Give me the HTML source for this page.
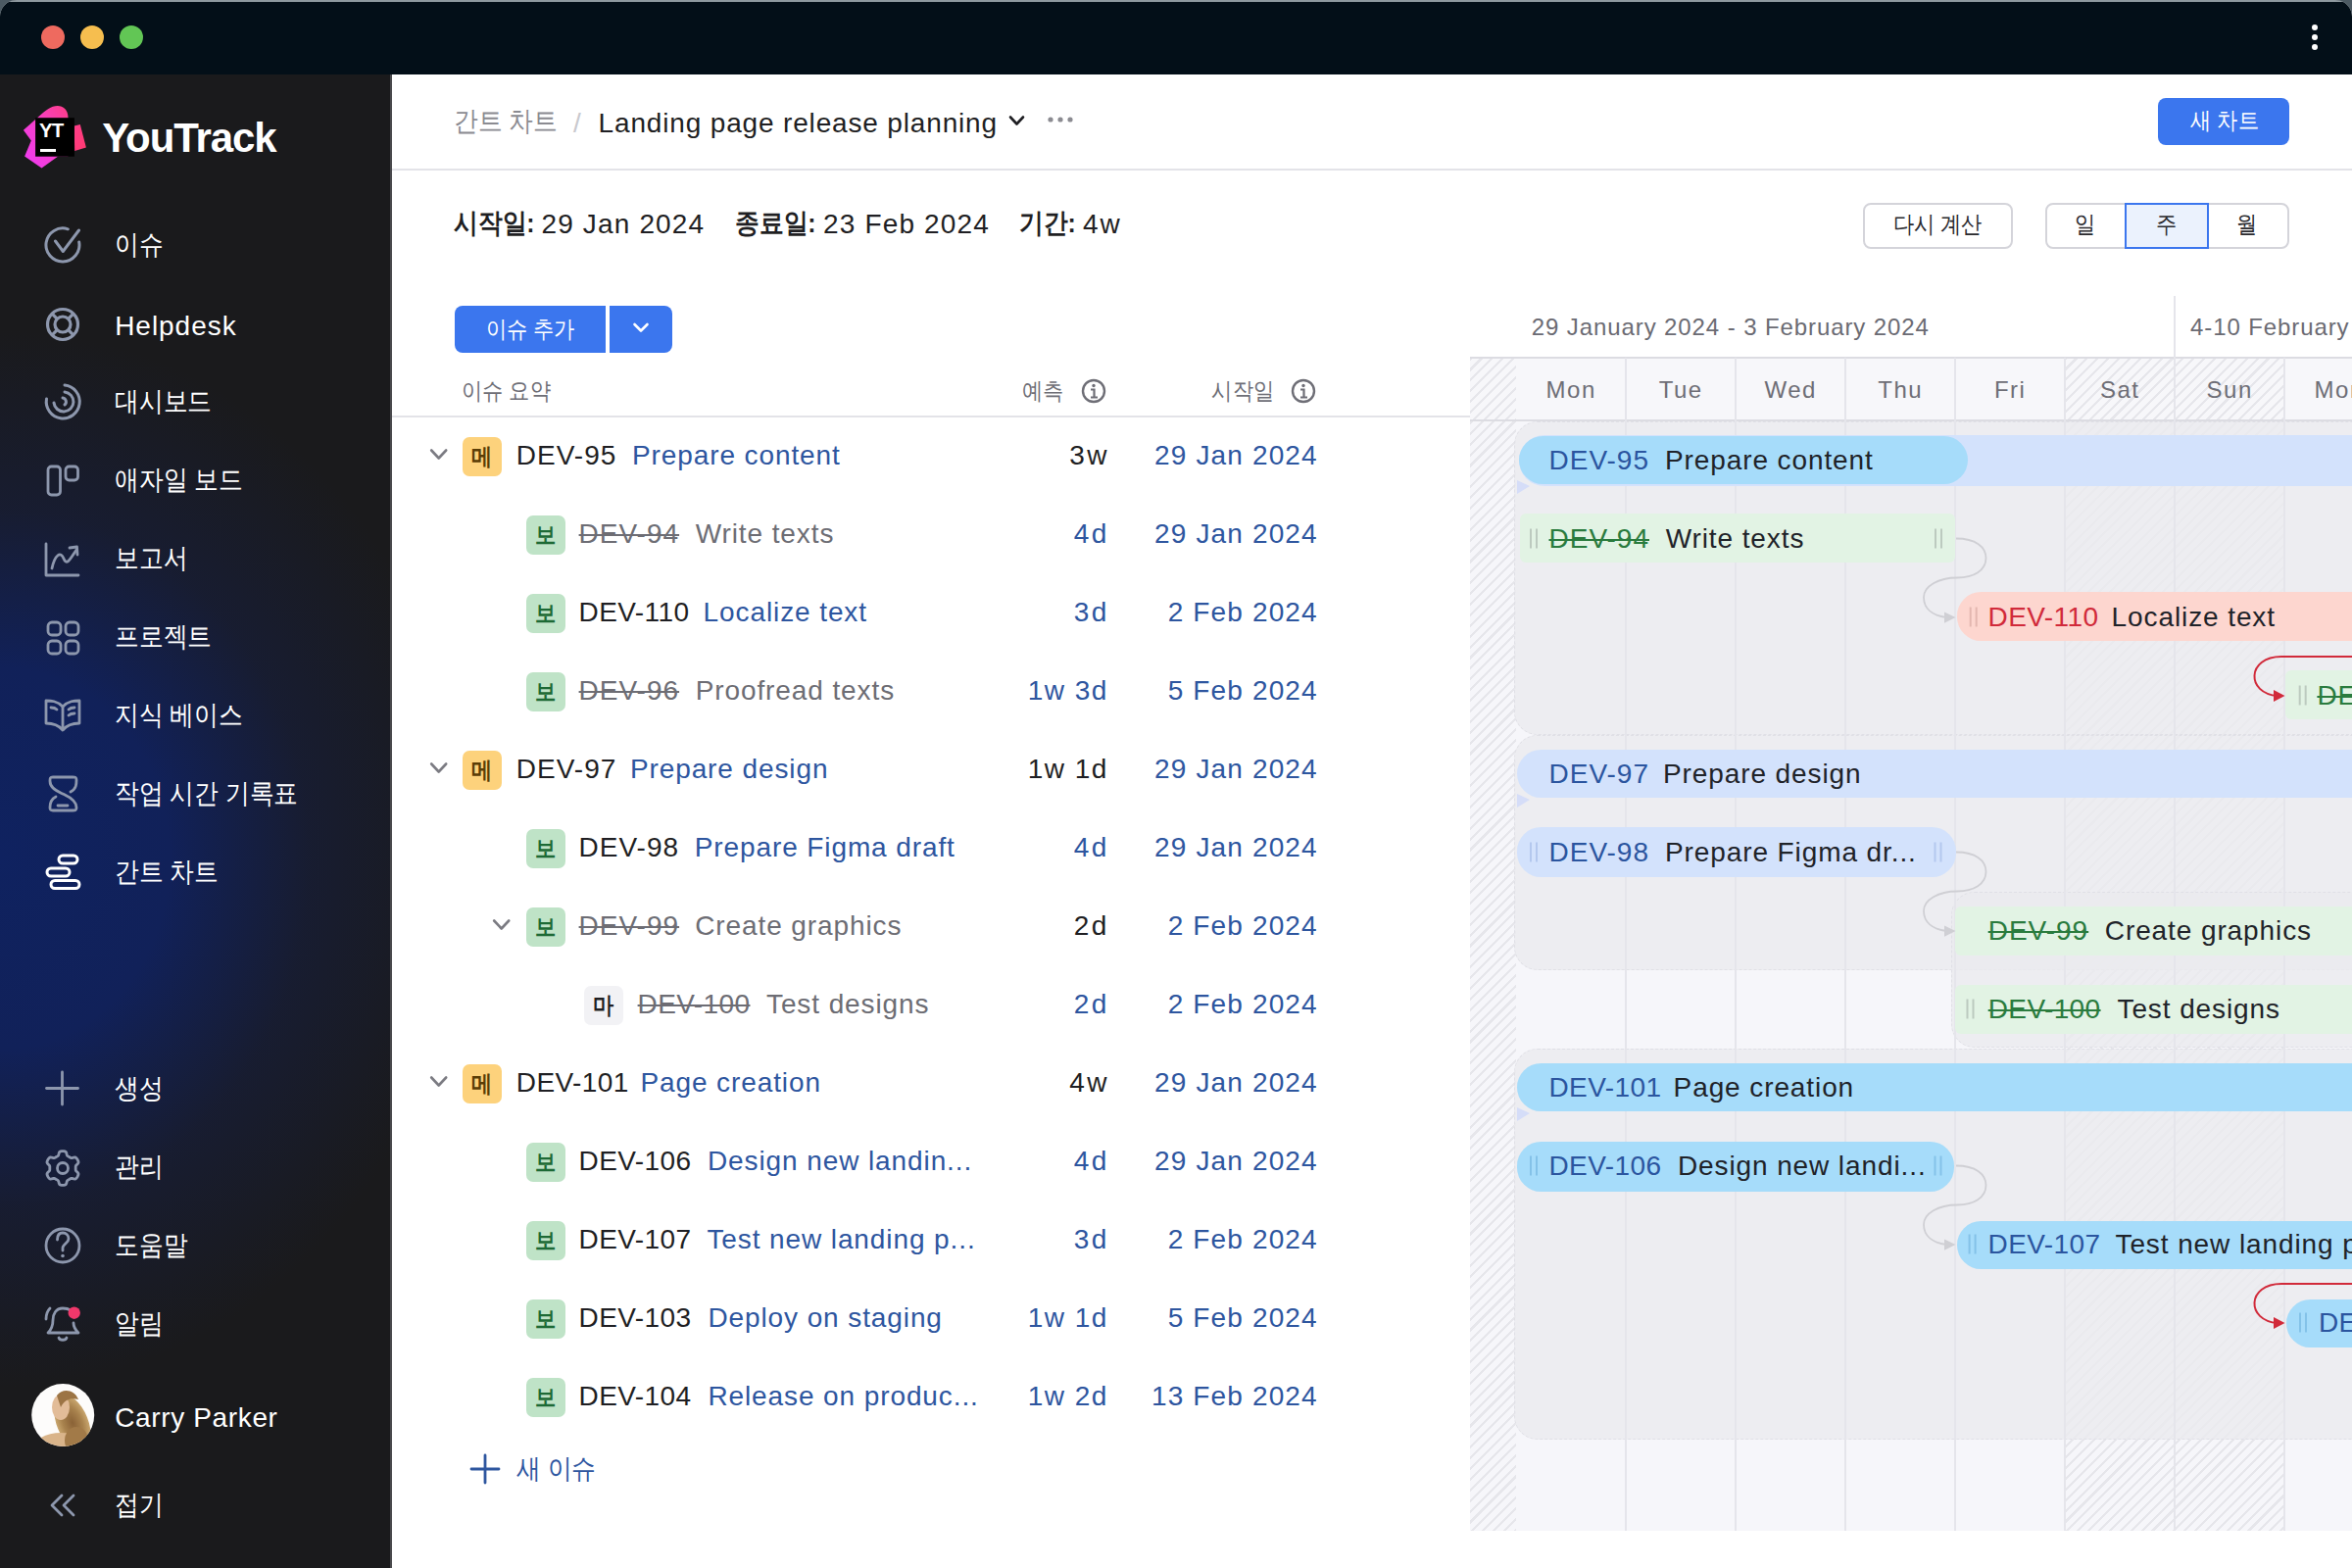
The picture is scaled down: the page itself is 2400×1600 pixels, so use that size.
<!DOCTYPE html>
<html><head><meta charset="utf-8"><style>
html,body{margin:0;padding:0;width:2400px;height:1600px;overflow:hidden;background:#4c5a63;}
#win{position:absolute;left:0;top:0;width:2400px;height:1600px;overflow:hidden;border-radius:17px 17px 0 0;background:#fff;}
.t{position:absolute;white-space:nowrap;font-family:'Liberation Sans', sans-serif;}
.r{position:absolute;}
svg{position:absolute;left:0;top:0;overflow:visible;}
</style></head><body><div id="win">

<div class="r" style="left:0px;top:0px;width:2400px;height:76px;background:#030f18;"></div>
<div class="r" style="left:0px;top:0px;width:2400px;height:1.5px;background:#8e999f;"></div>
<svg width="2400" height="80"><circle cx="54" cy="38" r="12" fill="#ee6a5f"/><circle cx="94" cy="38" r="12" fill="#f6be4f"/><circle cx="134" cy="38" r="12" fill="#62c655"/><circle cx="2362" cy="28" r="3" fill="#fff"/><circle cx="2362" cy="38" r="3" fill="#fff"/><circle cx="2362" cy="48" r="3" fill="#fff"/></svg>
<div class="r" style="left:0px;top:76px;width:400px;height:1524px;background:#1b1b1f;background:radial-gradient(ellipse 480px 540px at 0px 800px, #0f2260 0%, #112159 36%, rgba(22,30,62,0.6) 66%, rgba(26,26,28,0) 100%), #1a1a1c;"></div>
<div class="r" style="left:398px;top:76px;width:2px;height:1524px;background:#4a4a4d;"></div>
<svg width="400" height="200"><defs><linearGradient id="lg" x1="0" y1="1" x2="1" y2="0"><stop offset="0" stop-color="#ee3af5"/><stop offset="0.55" stop-color="#f640c8"/><stop offset="1" stop-color="#ff3d86"/></linearGradient><linearGradient id="lg2" x1="0" y1="0" x2="1" y2="1"><stop offset="0" stop-color="#ff3d8a"/><stop offset="1" stop-color="#ff3a70"/></linearGradient></defs><path d="M23.9 132.7 L40 118.4 C47 112.5 52 108 58.8 108 C64.5 108 69.5 112 69.5 120 L69.5 159.5 L59.3 159.5 L42.5 171.4 L25.1 159.4 L31.8 143.4 Z" fill="url(#lg)"/><path d="M75.7 128.6 L81.8 127 L87.9 150.5 L76.2 154 Z" fill="url(#lg2)"/><rect x="36.1" y="120.2" width="39.8" height="39.5" fill="#000"/><text x="40" y="140.3" font-family="Liberation Sans" font-weight="700" font-size="20.5" fill="#fff" letter-spacing="-0.8">YT</text><rect x="41" y="152" width="16" height="3" fill="#fff"/></svg>
<div class="t " style="top:119.8px;font-size:42px;line-height:42px;color:#ffffff;font-weight:700;letter-spacing:-1.1px;word-spacing:0px;left:104.3px;transform-origin:0 0;">YouTrack</div>
<svg width="400" height="1600"><path d="M80.7 247 A17 17 0 1 1 69.3 233.8" fill="none" stroke="#8d97ad" stroke-width="3" stroke-linecap="round"/><path d="M56.5 246 L64.3 256.5 L80.5 235" fill="none" stroke="#8d97ad" stroke-width="3" stroke-linecap="round" stroke-linejoin="round"/><g fill="none" stroke="#8d97ad" stroke-width="3.2"><circle cx="64" cy="331" r="15.5"/><circle cx="64" cy="331" r="8"/><line x1="69.7" y1="336.7" x2="75.3" y2="342.3"/><line x1="58.3" y1="336.7" x2="52.7" y2="342.3"/><line x1="58.3" y1="325.3" x2="52.7" y2="319.7"/><line x1="69.7" y1="325.3" x2="75.3" y2="319.7"/></g><g fill="none" stroke="#8d97ad" stroke-width="3" stroke-linecap="round"><path d="M66 393 A17 17 0 1 1 47.5 407"/><path d="M66 400 A10 10 0 1 1 55 411"/><path d="M64 406 A4 4 0 0 1 66 413"/></g><g fill="none" stroke="#8d97ad" stroke-width="2.8"><rect x="49" y="476" width="12.5" height="29" rx="3.5"/><rect x="67" y="476" width="12.5" height="14" rx="3.5"/></g><g fill="none" stroke="#8d97ad" stroke-width="2.8" stroke-linecap="round" stroke-linejoin="round"><path d="M47 555 L47 587 L80 587"/><path d="M53 580 C56 566 62 562 65 570 C68 578 72 570 78 561"/><path d="M71 559 L78.5 558 L79 566"/></g><g fill="none" stroke="#8d97ad" stroke-width="2.8"><rect x="49" y="635" width="13" height="13" rx="4"/><rect x="49" y="654" width="13" height="13" rx="4"/><rect x="67" y="635" width="13" height="13" rx="4"/><rect x="67" y="654" width="13" height="13" rx="4"/></g><g fill="none" stroke="#8d97ad" stroke-width="2.8" stroke-linejoin="round" stroke-linecap="round"><path d="M64 721 C58 715 52 715 47 715 L47 738 C53 738 59 739 64 745 C69 739 75 738 81 738 L81 715 C76 715 70 715 64 721 Z"/><path d="M64 721 L64 744"/><path d="M52 722 C54 722 56 722 58 724"/><path d="M70 724 C72 722 74 722 76 722"/><path d="M70 730 C72 728 74 728 76 728"/></g><g fill="none" stroke="#8d97ad" stroke-width="2.8" stroke-linecap="round" stroke-linejoin="round"><path d="M72 808 C78 805 78 800 78 796 C78 793 77 793 74 793 L54 793 C51 793 51 794 51 797 C51 805 60 808 64 810 C68 812 78 816 78 824 C78 827 77 827 74 827 L54 827 C51 827 51 826 51 824 C51 818 53 815 57 813"/><path d="M59 822 L69 822"/></g><g fill="none" stroke="#fff" stroke-width="3"><rect x="60" y="873" width="19" height="8" rx="4"/><rect x="48" y="886" width="23" height="8" rx="4"/><rect x="52" y="898.5" width="29" height="8" rx="4"/></g><g stroke="#8d97ad" stroke-width="2.8" stroke-linecap="round"><path d="M63.5 1094 L63.5 1127"/><path d="M47.5 1110.5 L79.5 1110.5"/></g><g fill="none" stroke="#8d97ad" stroke-width="2.8" stroke-linejoin="round"><path d="M77.20 1192.00 L77.20 1192.46 L77.19 1192.92 L77.19 1193.39 L77.23 1193.86 L77.37 1194.36 L77.72 1194.92 L78.37 1195.58 L79.17 1196.35 L79.76 1197.12 L80.00 1197.82 L79.98 1198.46 L79.83 1199.05 L79.62 1199.62 L79.36 1200.17 L79.07 1200.70 L78.75 1201.22 L78.41 1201.72 L78.02 1202.19 L77.58 1202.61 L77.04 1202.94 L76.32 1203.09 L75.36 1202.97 L74.29 1202.66 L73.39 1202.42 L72.73 1202.40 L72.23 1202.53 L71.80 1202.73 L71.39 1202.96 L71.00 1203.20 L70.60 1203.43 L70.20 1203.66 L69.80 1203.89 L69.40 1204.12 L69.01 1204.39 L68.64 1204.76 L68.33 1205.34 L68.08 1206.24 L67.82 1207.32 L67.45 1208.21 L66.96 1208.76 L66.40 1209.07 L65.81 1209.24 L65.21 1209.33 L64.61 1209.38 L64.00 1209.40 L63.39 1209.38 L62.79 1209.33 L62.19 1209.24 L61.60 1209.07 L61.04 1208.76 L60.55 1208.21 L60.18 1207.32 L59.92 1206.24 L59.67 1205.34 L59.36 1204.76 L58.99 1204.39 L58.60 1204.12 L58.20 1203.89 L57.80 1203.66 L57.40 1203.43 L57.00 1203.20 L56.61 1202.96 L56.20 1202.73 L55.77 1202.53 L55.27 1202.40 L54.61 1202.42 L53.71 1202.66 L52.64 1202.97 L51.68 1203.09 L50.96 1202.94 L50.42 1202.61 L49.98 1202.19 L49.59 1201.72 L49.25 1201.22 L48.93 1200.70 L48.64 1200.17 L48.38 1199.62 L48.17 1199.05 L48.02 1198.46 L48.00 1197.82 L48.24 1197.12 L48.83 1196.35 L49.63 1195.58 L50.28 1194.92 L50.63 1194.36 L50.77 1193.86 L50.81 1193.39 L50.81 1192.92 L50.80 1192.46 L50.80 1192.00 L50.80 1191.54 L50.81 1191.08 L50.81 1190.61 L50.77 1190.14 L50.63 1189.64 L50.28 1189.08 L49.63 1188.42 L48.83 1187.65 L48.24 1186.88 L48.00 1186.18 L48.02 1185.54 L48.17 1184.95 L48.38 1184.38 L48.64 1183.83 L48.93 1183.30 L49.25 1182.78 L49.59 1182.28 L49.98 1181.81 L50.42 1181.39 L50.96 1181.06 L51.68 1180.91 L52.64 1181.03 L53.71 1181.34 L54.61 1181.58 L55.27 1181.60 L55.77 1181.47 L56.20 1181.27 L56.61 1181.04 L57.00 1180.80 L57.40 1180.57 L57.80 1180.34 L58.20 1180.11 L58.60 1179.88 L58.99 1179.61 L59.36 1179.24 L59.67 1178.66 L59.92 1177.76 L60.18 1176.68 L60.55 1175.79 L61.04 1175.24 L61.60 1174.93 L62.19 1174.76 L62.79 1174.67 L63.39 1174.62 L64.00 1174.60 L64.61 1174.62 L65.21 1174.67 L65.81 1174.76 L66.40 1174.93 L66.96 1175.24 L67.45 1175.79 L67.82 1176.68 L68.08 1177.76 L68.33 1178.66 L68.64 1179.24 L69.01 1179.61 L69.40 1179.88 L69.80 1180.11 L70.20 1180.34 L70.60 1180.57 L71.00 1180.80 L71.39 1181.04 L71.80 1181.27 L72.23 1181.47 L72.73 1181.60 L73.39 1181.58 L74.29 1181.34 L75.36 1181.03 L76.32 1180.91 L77.04 1181.06 L77.58 1181.39 L78.02 1181.81 L78.41 1182.28 L78.75 1182.78 L79.07 1183.30 L79.36 1183.83 L79.62 1184.38 L79.83 1184.95 L79.98 1185.54 L80.00 1186.18 L79.76 1186.88 L79.17 1187.65 L78.37 1188.42 L77.72 1189.08 L77.37 1189.64 L77.23 1190.14 L77.19 1190.61 L77.19 1191.08 L77.20 1191.54 L77.20 1192.00Z"/><circle cx="64" cy="1192" r="5.5"/></g><g fill="none" stroke="#8d97ad" stroke-width="2.8" stroke-linecap="round"><circle cx="64" cy="1271" r="17"/><path d="M58.5 1265 C58.5 1260 61 1258 64 1258 C67.5 1258 70 1260.5 70 1264 C70 1268 65 1269 64 1273 L64 1276"/></g><circle cx="64" cy="1281.5" r="1.8" fill="#8d97ad"/><g fill="none" stroke="#8d97ad" stroke-width="2.8" stroke-linecap="round" stroke-linejoin="round"><path d="M72 1337 C69 1335 67 1335 64 1335 C57 1335 54 1341 54 1347 C54 1354 52 1357 49 1360 L80 1360 C77 1357 75 1354 75 1350"/><path d="M60 1365 C61 1368 67 1368 68 1365"/><path d="M47 1346 C47 1342 49 1337 51 1335"/></g><circle cx="75.7" cy="1339.7" r="6.2" fill="#f0386b"/><g fill="none" stroke="#8d97ad" stroke-width="2.8" stroke-linecap="round" stroke-linejoin="round"><path d="M63 1526 L53 1536 L63 1546"/><path d="M75 1526 L65 1536 L75 1546"/></g></svg>
<svg width="400" height="1600"><defs><clipPath id="av"><circle cx="64.2" cy="1444" r="32"/></clipPath><radialGradient id="hair" cx="0.5" cy="0.5" r="0.5"><stop offset="0" stop-color="#8a6236"/><stop offset="0.6" stop-color="#a9834e"/><stop offset="1" stop-color="#c9a66e"/></radialGradient></defs><g clip-path="url(#av)"><rect x="30" y="1410" width="70" height="70" fill="#fdfcfb"/><ellipse cx="74" cy="1452" rx="16" ry="30" fill="url(#hair)" transform="rotate(-22 74 1452)"/><ellipse cx="62" cy="1436" rx="9" ry="13" fill="#e2bc98"/><path d="M58 1424 C64 1416 76 1418 80 1428 C72 1426 66 1428 62 1436 Z" fill="#9c7444"/><ellipse cx="62" cy="1478" rx="28" ry="16" fill="#d9b48a"/><ellipse cx="78" cy="1470" rx="12" ry="14" fill="#a27a48"/></g></svg>
<div class="t " style="top:236.0px;font-size:28px;line-height:28px;color:#ffffff;font-weight:400;letter-spacing:0px;word-spacing:0px;left:117.4px;transform-origin:0 0;transform:scaleX(0.885);">이슈</div>
<div class="t " style="top:318.6px;font-size:28px;line-height:28px;color:#ffffff;font-weight:400;letter-spacing:0.96px;word-spacing:0px;left:117.2px;transform-origin:0 0;">Helpdesk</div>
<div class="t " style="top:396.0px;font-size:28px;line-height:28px;color:#ffffff;font-weight:400;letter-spacing:0px;word-spacing:0px;left:117.4px;transform-origin:0 0;transform:scaleX(0.885);">대시보드</div>
<div class="t " style="top:475.5px;font-size:28px;line-height:28px;color:#ffffff;font-weight:400;letter-spacing:0px;word-spacing:0px;left:117.4px;transform-origin:0 0;transform:scaleX(0.885);">애자일 보드</div>
<div class="t " style="top:555.5px;font-size:28px;line-height:28px;color:#ffffff;font-weight:400;letter-spacing:0px;word-spacing:0px;left:117.4px;transform-origin:0 0;transform:scaleX(0.885);">보고서</div>
<div class="t " style="top:635.5px;font-size:28px;line-height:28px;color:#ffffff;font-weight:400;letter-spacing:0px;word-spacing:0px;left:117.4px;transform-origin:0 0;transform:scaleX(0.885);">프로젝트</div>
<div class="t " style="top:715.5px;font-size:28px;line-height:28px;color:#ffffff;font-weight:400;letter-spacing:0px;word-spacing:0px;left:117.4px;transform-origin:0 0;transform:scaleX(0.885);">지식 베이스</div>
<div class="t " style="top:795.5px;font-size:28px;line-height:28px;color:#ffffff;font-weight:400;letter-spacing:0px;word-spacing:0px;left:117.4px;transform-origin:0 0;transform:scaleX(0.885);">작업 시간 기록표</div>
<div class="t " style="top:875.5px;font-size:28px;line-height:28px;color:#ffffff;font-weight:400;letter-spacing:0px;word-spacing:0px;left:117.4px;transform-origin:0 0;transform:scaleX(0.885);">간트 차트</div>
<div class="t " style="top:1097.0px;font-size:28px;line-height:28px;color:#ffffff;font-weight:400;letter-spacing:0px;word-spacing:0px;left:117.4px;transform-origin:0 0;transform:scaleX(0.885);">생성</div>
<div class="t " style="top:1177.0px;font-size:28px;line-height:28px;color:#ffffff;font-weight:400;letter-spacing:0px;word-spacing:0px;left:117.4px;transform-origin:0 0;transform:scaleX(0.885);">관리</div>
<div class="t " style="top:1257.0px;font-size:28px;line-height:28px;color:#ffffff;font-weight:400;letter-spacing:0px;word-spacing:0px;left:117.4px;transform-origin:0 0;transform:scaleX(0.885);">도움말</div>
<div class="t " style="top:1337.0px;font-size:28px;line-height:28px;color:#ffffff;font-weight:400;letter-spacing:0px;word-spacing:0px;left:117.4px;transform-origin:0 0;transform:scaleX(0.885);">알림</div>
<div class="t " style="top:1432.6px;font-size:28px;line-height:28px;color:#ffffff;font-weight:400;letter-spacing:0.64px;word-spacing:0px;left:117.2px;transform-origin:0 0;">Carry Parker</div>
<div class="t " style="top:1521.5px;font-size:28px;line-height:28px;color:#ffffff;font-weight:400;letter-spacing:0px;word-spacing:0px;left:117.4px;transform-origin:0 0;transform:scaleX(0.885);">접기</div>
<div class="t " style="top:110.0px;font-size:28px;line-height:28px;color:#8b8b91;font-weight:400;letter-spacing:0px;word-spacing:0px;left:462.8px;transform-origin:0 0;transform:scaleX(0.885);">간트 차트</div>
<div class="t " style="top:111.6px;font-size:28px;line-height:28px;color:#c9c9ce;font-weight:400;letter-spacing:0px;word-spacing:0px;left:585.0px;transform-origin:0 0;">/</div>
<div class="t " style="top:111.8px;font-size:28px;line-height:28px;color:#1f1f23;font-weight:400;letter-spacing:0.84px;word-spacing:0px;left:610.6px;transform-origin:0 0;">Landing page release planning</div>
<svg width="2400" height="200"><path d="M1031 119.5 L1037.5 126.5 L1044 119.5" fill="none" stroke="#1f1f23" stroke-width="2.6" stroke-linecap="round" stroke-linejoin="round"/><circle cx="1072" cy="122" r="2.6" fill="#8b8b91"/><circle cx="1082" cy="122" r="2.6" fill="#8b8b91"/><circle cx="1092" cy="122" r="2.6" fill="#8b8b91"/></svg>
<div class="r" style="left:2202px;top:100px;width:134px;height:48px;border-radius:8px;background:#3b76ee;"></div>
<div class="t " style="top:111.4px;font-size:24px;line-height:24px;color:#ffffff;font-weight:400;letter-spacing:0px;word-spacing:0px;left:1869.5px;width:800px;text-align:center;transform-origin:50% 0;transform:scaleX(0.885);">새 차트</div>
<div class="r" style="left:400px;top:172px;width:2000px;height:2px;background:#e3e3e8;"></div>
<div class="t " style="top:213.5px;font-size:28px;line-height:28px;color:#1f1f23;font-weight:700;letter-spacing:0px;word-spacing:0px;left:463.4px;transform-origin:0 0;transform:scaleX(0.885);">시작일:</div>
<div class="t " style="top:214.6px;font-size:28px;line-height:28px;color:#1f1f23;font-weight:400;letter-spacing:1.15px;word-spacing:0px;left:552.5px;transform-origin:0 0;">29 Jan 2024</div>
<div class="t " style="top:213.5px;font-size:28px;line-height:28px;color:#1f1f23;font-weight:700;letter-spacing:0px;word-spacing:0px;left:750.3px;transform-origin:0 0;transform:scaleX(0.885);">종료일:</div>
<div class="t " style="top:214.6px;font-size:28px;line-height:28px;color:#1f1f23;font-weight:400;letter-spacing:1.15px;word-spacing:0px;left:840.1px;transform-origin:0 0;">23 Feb 2024</div>
<div class="t " style="top:213.5px;font-size:28px;line-height:28px;color:#1f1f23;font-weight:700;letter-spacing:0px;word-spacing:0px;left:1040.0px;transform-origin:0 0;transform:scaleX(0.885);">기간:</div>
<div class="t " style="top:214.6px;font-size:28px;line-height:28px;color:#1f1f23;font-weight:400;letter-spacing:2px;word-spacing:0px;left:1105.0px;transform-origin:0 0;">4w</div>
<div class="r" style="left:1900.5px;top:206.5px;width:153px;height:47px;box-sizing:border-box;border-radius:8px;border:2px solid #d4d4da;background:#fff;"></div>
<div class="t " style="top:217.0px;font-size:24px;line-height:24px;color:#2a2a2e;font-weight:400;letter-spacing:0px;word-spacing:0px;left:1576.7px;width:800px;text-align:center;transform-origin:50% 0;transform:scaleX(0.885);">다시 계산</div>
<div class="r" style="left:2086.5px;top:206.5px;width:249px;height:47px;box-sizing:border-box;border-radius:8px;border:2px solid #d4d4da;background:#fff;"></div>
<div class="r" style="left:2168px;top:206.5px;width:85.5px;height:47px;box-sizing:border-box;border:2px solid #3b76ee;background:#ebf2fd;"></div>
<div class="t " style="top:217.0px;font-size:24px;line-height:24px;color:#2a2a2e;font-weight:400;letter-spacing:0px;word-spacing:0px;left:1728.0px;width:800px;text-align:center;transform-origin:50% 0;transform:scaleX(0.885);">일</div>
<div class="t " style="top:217.0px;font-size:24px;line-height:24px;color:#2a2a2e;font-weight:400;letter-spacing:0px;word-spacing:0px;left:1810.5px;width:800px;text-align:center;transform-origin:50% 0;transform:scaleX(0.885);">주</div>
<div class="t " style="top:217.0px;font-size:24px;line-height:24px;color:#2a2a2e;font-weight:400;letter-spacing:0px;word-spacing:0px;left:1893.0px;width:800px;text-align:center;transform-origin:50% 0;transform:scaleX(0.885);">월</div>
<div class="r" style="left:464px;top:312px;width:154px;height:48px;border-radius:8px 0 0 8px;background:#3b76ee;"></div>
<div class="r" style="left:622px;top:312px;width:64px;height:48px;border-radius:0 8px 8px 0;background:#3b76ee;"></div>
<div class="t " style="top:324.0px;font-size:24px;line-height:24px;color:#ffffff;font-weight:400;letter-spacing:0px;word-spacing:0px;left:141.2px;width:800px;text-align:center;transform-origin:50% 0;transform:scaleX(0.885);">이슈 추가</div>
<svg width="2400" height="600"><path d="M647.5 331 L654 337.5 L660.5 331" fill="none" stroke="#fff" stroke-width="2.6" stroke-linecap="round" stroke-linejoin="round"/></svg>
<div class="t " style="top:387.0px;font-size:24px;line-height:24px;color:#6e6e76;font-weight:400;letter-spacing:0px;word-spacing:0px;left:471.2px;transform-origin:0 0;transform:scaleX(0.885);">이슈 요약</div>
<div class="t " style="top:387.0px;font-size:24px;line-height:24px;color:#6e6e76;font-weight:400;letter-spacing:0px;word-spacing:0px;right:1315.1px;text-align:right;transform-origin:100% 0;transform:scaleX(0.885);">예측</div>
<div class="t " style="top:387.0px;font-size:24px;line-height:24px;color:#6e6e76;font-weight:400;letter-spacing:0px;word-spacing:0px;right:1099.6px;text-align:right;transform-origin:100% 0;transform:scaleX(0.885);">시작일</div>
<svg width="2400" height="600"><circle cx="1116" cy="399" r="11" fill="none" stroke="#6e6e76" stroke-width="2.4"/><circle cx="1116" cy="393.5" r="1.7" fill="#6e6e76"/><path d="M1113 397.5 L1116.5 397.5 L1116.5 405.5 M1113 405.5 L1120 405.5" fill="none" stroke="#6e6e76" stroke-width="2.2"/><circle cx="1330" cy="399" r="11" fill="none" stroke="#6e6e76" stroke-width="2.4"/><circle cx="1330" cy="393.5" r="1.7" fill="#6e6e76"/><path d="M1327 397.5 L1330.5 397.5 L1330.5 405.5 M1327 405.5 L1334 405.5" fill="none" stroke="#6e6e76" stroke-width="2.2"/></svg>
<div class="r" style="left:400px;top:424px;width:1100px;height:2px;background:#e3e3e8;"></div>
<div class="r" style="left:472px;top:446px;width:40px;height:40px;background:#fdd27c;border-radius:7px;"></div>
<div class="t " style="top:454.0px;font-size:24px;line-height:24px;color:#5a3d06;font-weight:700;letter-spacing:0px;word-spacing:0px;left:92.0px;width:800px;text-align:center;transform-origin:50% 0;transform:scaleX(0.885);">메</div>
<div class="t " style="top:450.6px;font-size:28px;line-height:28px;color:#1f1f23;font-weight:400;letter-spacing:1.0px;word-spacing:0px;left:526.8px;transform-origin:0 0;">DEV-95</div>
<div class="t " style="top:450.6px;font-size:28px;line-height:28px;color:#2e569f;font-weight:400;letter-spacing:0.9px;word-spacing:0px;left:645.0px;transform-origin:0 0;">Prepare content</div>
<div class="t " style="top:450.6px;font-size:28px;line-height:28px;color:#1f1f23;font-weight:400;letter-spacing:2.4px;word-spacing:0px;right:1268.2px;text-align:right;transform-origin:100% 0;">3w</div>
<div class="t " style="top:450.6px;font-size:28px;line-height:28px;color:#2e569f;font-weight:400;letter-spacing:1.15px;word-spacing:0px;right:1055.2px;text-align:right;transform-origin:100% 0;">29 Jan 2024</div>
<div class="r" style="left:536.5px;top:526px;width:40px;height:40px;background:#bfe3c7;border-radius:7px;"></div>
<div class="t " style="top:534.0px;font-size:24px;line-height:24px;color:#1d6a35;font-weight:700;letter-spacing:0px;word-spacing:0px;left:156.5px;width:800px;text-align:center;transform-origin:50% 0;transform:scaleX(0.885);">보</div>
<div class="t " style="top:530.6px;font-size:28px;line-height:28px;color:#6d6d74;font-weight:400;letter-spacing:1.0px;word-spacing:0px;left:590.6px;transform-origin:0 0;text-decoration:line-through;text-decoration-thickness:2px;">DEV-94</div>
<div class="t " style="top:530.6px;font-size:28px;line-height:28px;color:#6d6d74;font-weight:400;letter-spacing:0.9px;word-spacing:0px;left:709.7px;transform-origin:0 0;">Write texts</div>
<div class="t " style="top:530.6px;font-size:28px;line-height:28px;color:#2e569f;font-weight:400;letter-spacing:2.4px;word-spacing:0px;right:1268.2px;text-align:right;transform-origin:100% 0;">4d</div>
<div class="t " style="top:530.6px;font-size:28px;line-height:28px;color:#2e569f;font-weight:400;letter-spacing:1.15px;word-spacing:0px;right:1055.2px;text-align:right;transform-origin:100% 0;">29 Jan 2024</div>
<div class="r" style="left:536.5px;top:606px;width:40px;height:40px;background:#bfe3c7;border-radius:7px;"></div>
<div class="t " style="top:614.0px;font-size:24px;line-height:24px;color:#1d6a35;font-weight:700;letter-spacing:0px;word-spacing:0px;left:156.5px;width:800px;text-align:center;transform-origin:50% 0;transform:scaleX(0.885);">보</div>
<div class="t " style="top:610.6px;font-size:28px;line-height:28px;color:#1f1f23;font-weight:400;letter-spacing:0.4px;word-spacing:0px;left:590.6px;transform-origin:0 0;">DEV-110</div>
<div class="t " style="top:610.6px;font-size:28px;line-height:28px;color:#2e569f;font-weight:400;letter-spacing:0.9px;word-spacing:0px;left:717.6px;transform-origin:0 0;">Localize text</div>
<div class="t " style="top:610.6px;font-size:28px;line-height:28px;color:#2e569f;font-weight:400;letter-spacing:2.4px;word-spacing:0px;right:1268.2px;text-align:right;transform-origin:100% 0;">3d</div>
<div class="t " style="top:610.6px;font-size:28px;line-height:28px;color:#2e569f;font-weight:400;letter-spacing:1.15px;word-spacing:0px;right:1055.2px;text-align:right;transform-origin:100% 0;">2 Feb 2024</div>
<div class="r" style="left:536.5px;top:686px;width:40px;height:40px;background:#bfe3c7;border-radius:7px;"></div>
<div class="t " style="top:694.0px;font-size:24px;line-height:24px;color:#1d6a35;font-weight:700;letter-spacing:0px;word-spacing:0px;left:156.5px;width:800px;text-align:center;transform-origin:50% 0;transform:scaleX(0.885);">보</div>
<div class="t " style="top:690.6px;font-size:28px;line-height:28px;color:#6d6d74;font-weight:400;letter-spacing:1.0px;word-spacing:0px;left:590.6px;transform-origin:0 0;text-decoration:line-through;text-decoration-thickness:2px;">DEV-96</div>
<div class="t " style="top:690.6px;font-size:28px;line-height:28px;color:#6d6d74;font-weight:400;letter-spacing:0.9px;word-spacing:0px;left:709.7px;transform-origin:0 0;">Proofread texts</div>
<div class="t " style="top:690.6px;font-size:28px;line-height:28px;color:#2e569f;font-weight:400;letter-spacing:1.5px;word-spacing:0px;right:1269.1px;text-align:right;transform-origin:100% 0;">1w 3d</div>
<div class="t " style="top:690.6px;font-size:28px;line-height:28px;color:#2e569f;font-weight:400;letter-spacing:1.15px;word-spacing:0px;right:1055.2px;text-align:right;transform-origin:100% 0;">5 Feb 2024</div>
<div class="r" style="left:472px;top:766px;width:40px;height:40px;background:#fdd27c;border-radius:7px;"></div>
<div class="t " style="top:774.0px;font-size:24px;line-height:24px;color:#5a3d06;font-weight:700;letter-spacing:0px;word-spacing:0px;left:92.0px;width:800px;text-align:center;transform-origin:50% 0;transform:scaleX(0.885);">메</div>
<div class="t " style="top:770.6px;font-size:28px;line-height:28px;color:#1f1f23;font-weight:400;letter-spacing:1.0px;word-spacing:0px;left:526.8px;transform-origin:0 0;">DEV-97</div>
<div class="t " style="top:770.6px;font-size:28px;line-height:28px;color:#2e569f;font-weight:400;letter-spacing:0.9px;word-spacing:0px;left:642.9px;transform-origin:0 0;">Prepare design</div>
<div class="t " style="top:770.6px;font-size:28px;line-height:28px;color:#1f1f23;font-weight:400;letter-spacing:1.5px;word-spacing:0px;right:1269.1px;text-align:right;transform-origin:100% 0;">1w 1d</div>
<div class="t " style="top:770.6px;font-size:28px;line-height:28px;color:#2e569f;font-weight:400;letter-spacing:1.15px;word-spacing:0px;right:1055.2px;text-align:right;transform-origin:100% 0;">29 Jan 2024</div>
<div class="r" style="left:536.5px;top:846px;width:40px;height:40px;background:#bfe3c7;border-radius:7px;"></div>
<div class="t " style="top:854.0px;font-size:24px;line-height:24px;color:#1d6a35;font-weight:700;letter-spacing:0px;word-spacing:0px;left:156.5px;width:800px;text-align:center;transform-origin:50% 0;transform:scaleX(0.885);">보</div>
<div class="t " style="top:850.6px;font-size:28px;line-height:28px;color:#1f1f23;font-weight:400;letter-spacing:1.0px;word-spacing:0px;left:590.6px;transform-origin:0 0;">DEV-98</div>
<div class="t " style="top:850.6px;font-size:28px;line-height:28px;color:#2e569f;font-weight:400;letter-spacing:0.9px;word-spacing:0px;left:708.7px;transform-origin:0 0;">Prepare Figma draft</div>
<div class="t " style="top:850.6px;font-size:28px;line-height:28px;color:#2e569f;font-weight:400;letter-spacing:2.4px;word-spacing:0px;right:1268.2px;text-align:right;transform-origin:100% 0;">4d</div>
<div class="t " style="top:850.6px;font-size:28px;line-height:28px;color:#2e569f;font-weight:400;letter-spacing:1.15px;word-spacing:0px;right:1055.2px;text-align:right;transform-origin:100% 0;">29 Jan 2024</div>
<div class="r" style="left:536.5px;top:926px;width:40px;height:40px;background:#bfe3c7;border-radius:7px;"></div>
<div class="t " style="top:934.0px;font-size:24px;line-height:24px;color:#1d6a35;font-weight:700;letter-spacing:0px;word-spacing:0px;left:156.5px;width:800px;text-align:center;transform-origin:50% 0;transform:scaleX(0.885);">보</div>
<div class="t " style="top:930.6px;font-size:28px;line-height:28px;color:#6d6d74;font-weight:400;letter-spacing:1.0px;word-spacing:0px;left:590.6px;transform-origin:0 0;text-decoration:line-through;text-decoration-thickness:2px;">DEV-99</div>
<div class="t " style="top:930.6px;font-size:28px;line-height:28px;color:#6d6d74;font-weight:400;letter-spacing:0.9px;word-spacing:0px;left:709.2px;transform-origin:0 0;">Create graphics</div>
<div class="t " style="top:930.6px;font-size:28px;line-height:28px;color:#1f1f23;font-weight:400;letter-spacing:2.4px;word-spacing:0px;right:1268.2px;text-align:right;transform-origin:100% 0;">2d</div>
<div class="t " style="top:930.6px;font-size:28px;line-height:28px;color:#2e569f;font-weight:400;letter-spacing:1.15px;word-spacing:0px;right:1055.2px;text-align:right;transform-origin:100% 0;">2 Feb 2024</div>
<div class="r" style="left:596px;top:1006px;width:40px;height:40px;background:#f2f2f5;border-radius:7px;"></div>
<div class="t " style="top:1014.0px;font-size:24px;line-height:24px;color:#1f1f23;font-weight:700;letter-spacing:0px;word-spacing:0px;left:216.0px;width:800px;text-align:center;transform-origin:50% 0;transform:scaleX(0.885);">마</div>
<div class="t " style="top:1010.6px;font-size:28px;line-height:28px;color:#6d6d74;font-weight:400;letter-spacing:0.4px;word-spacing:0px;left:650.6px;transform-origin:0 0;text-decoration:line-through;text-decoration-thickness:2px;">DEV-100</div>
<div class="t " style="top:1010.6px;font-size:28px;line-height:28px;color:#6d6d74;font-weight:400;letter-spacing:0.9px;word-spacing:0px;left:782.0px;transform-origin:0 0;">Test designs</div>
<div class="t " style="top:1010.6px;font-size:28px;line-height:28px;color:#2e569f;font-weight:400;letter-spacing:2.4px;word-spacing:0px;right:1268.2px;text-align:right;transform-origin:100% 0;">2d</div>
<div class="t " style="top:1010.6px;font-size:28px;line-height:28px;color:#2e569f;font-weight:400;letter-spacing:1.15px;word-spacing:0px;right:1055.2px;text-align:right;transform-origin:100% 0;">2 Feb 2024</div>
<div class="r" style="left:472px;top:1086px;width:40px;height:40px;background:#fdd27c;border-radius:7px;"></div>
<div class="t " style="top:1094.0px;font-size:24px;line-height:24px;color:#5a3d06;font-weight:700;letter-spacing:0px;word-spacing:0px;left:92.0px;width:800px;text-align:center;transform-origin:50% 0;transform:scaleX(0.885);">메</div>
<div class="t " style="top:1090.6px;font-size:28px;line-height:28px;color:#1f1f23;font-weight:400;letter-spacing:0.4px;word-spacing:0px;left:526.8px;transform-origin:0 0;">DEV-101</div>
<div class="t " style="top:1090.6px;font-size:28px;line-height:28px;color:#2e569f;font-weight:400;letter-spacing:0.9px;word-spacing:0px;left:653.4px;transform-origin:0 0;">Page creation</div>
<div class="t " style="top:1090.6px;font-size:28px;line-height:28px;color:#1f1f23;font-weight:400;letter-spacing:2.4px;word-spacing:0px;right:1268.2px;text-align:right;transform-origin:100% 0;">4w</div>
<div class="t " style="top:1090.6px;font-size:28px;line-height:28px;color:#2e569f;font-weight:400;letter-spacing:1.15px;word-spacing:0px;right:1055.2px;text-align:right;transform-origin:100% 0;">29 Jan 2024</div>
<div class="r" style="left:536.5px;top:1166px;width:40px;height:40px;background:#bfe3c7;border-radius:7px;"></div>
<div class="t " style="top:1174.0px;font-size:24px;line-height:24px;color:#1d6a35;font-weight:700;letter-spacing:0px;word-spacing:0px;left:156.5px;width:800px;text-align:center;transform-origin:50% 0;transform:scaleX(0.885);">보</div>
<div class="t " style="top:1170.6px;font-size:28px;line-height:28px;color:#1f1f23;font-weight:400;letter-spacing:0.4px;word-spacing:0px;left:590.6px;transform-origin:0 0;">DEV-106</div>
<div class="t " style="top:1170.6px;font-size:28px;line-height:28px;color:#2e569f;font-weight:400;letter-spacing:0.9px;word-spacing:0px;left:722.0px;transform-origin:0 0;">Design new landin...</div>
<div class="t " style="top:1170.6px;font-size:28px;line-height:28px;color:#2e569f;font-weight:400;letter-spacing:2.4px;word-spacing:0px;right:1268.2px;text-align:right;transform-origin:100% 0;">4d</div>
<div class="t " style="top:1170.6px;font-size:28px;line-height:28px;color:#2e569f;font-weight:400;letter-spacing:1.15px;word-spacing:0px;right:1055.2px;text-align:right;transform-origin:100% 0;">29 Jan 2024</div>
<div class="r" style="left:536.5px;top:1246px;width:40px;height:40px;background:#bfe3c7;border-radius:7px;"></div>
<div class="t " style="top:1254.0px;font-size:24px;line-height:24px;color:#1d6a35;font-weight:700;letter-spacing:0px;word-spacing:0px;left:156.5px;width:800px;text-align:center;transform-origin:50% 0;transform:scaleX(0.885);">보</div>
<div class="t " style="top:1250.6px;font-size:28px;line-height:28px;color:#1f1f23;font-weight:400;letter-spacing:0.4px;word-spacing:0px;left:590.6px;transform-origin:0 0;">DEV-107</div>
<div class="t " style="top:1250.6px;font-size:28px;line-height:28px;color:#2e569f;font-weight:400;letter-spacing:0.9px;word-spacing:0px;left:721.4px;transform-origin:0 0;">Test new landing p...</div>
<div class="t " style="top:1250.6px;font-size:28px;line-height:28px;color:#2e569f;font-weight:400;letter-spacing:2.4px;word-spacing:0px;right:1268.2px;text-align:right;transform-origin:100% 0;">3d</div>
<div class="t " style="top:1250.6px;font-size:28px;line-height:28px;color:#2e569f;font-weight:400;letter-spacing:1.15px;word-spacing:0px;right:1055.2px;text-align:right;transform-origin:100% 0;">2 Feb 2024</div>
<div class="r" style="left:536.5px;top:1326px;width:40px;height:40px;background:#bfe3c7;border-radius:7px;"></div>
<div class="t " style="top:1334.0px;font-size:24px;line-height:24px;color:#1d6a35;font-weight:700;letter-spacing:0px;word-spacing:0px;left:156.5px;width:800px;text-align:center;transform-origin:50% 0;transform:scaleX(0.885);">보</div>
<div class="t " style="top:1330.6px;font-size:28px;line-height:28px;color:#1f1f23;font-weight:400;letter-spacing:0.4px;word-spacing:0px;left:590.6px;transform-origin:0 0;">DEV-103</div>
<div class="t " style="top:1330.6px;font-size:28px;line-height:28px;color:#2e569f;font-weight:400;letter-spacing:0.9px;word-spacing:0px;left:722.4px;transform-origin:0 0;">Deploy on staging</div>
<div class="t " style="top:1330.6px;font-size:28px;line-height:28px;color:#2e569f;font-weight:400;letter-spacing:1.5px;word-spacing:0px;right:1269.1px;text-align:right;transform-origin:100% 0;">1w 1d</div>
<div class="t " style="top:1330.6px;font-size:28px;line-height:28px;color:#2e569f;font-weight:400;letter-spacing:1.15px;word-spacing:0px;right:1055.2px;text-align:right;transform-origin:100% 0;">5 Feb 2024</div>
<div class="r" style="left:536.5px;top:1406px;width:40px;height:40px;background:#bfe3c7;border-radius:7px;"></div>
<div class="t " style="top:1414.0px;font-size:24px;line-height:24px;color:#1d6a35;font-weight:700;letter-spacing:0px;word-spacing:0px;left:156.5px;width:800px;text-align:center;transform-origin:50% 0;transform:scaleX(0.885);">보</div>
<div class="t " style="top:1410.6px;font-size:28px;line-height:28px;color:#1f1f23;font-weight:400;letter-spacing:0.4px;word-spacing:0px;left:590.6px;transform-origin:0 0;">DEV-104</div>
<div class="t " style="top:1410.6px;font-size:28px;line-height:28px;color:#2e569f;font-weight:400;letter-spacing:0.9px;word-spacing:0px;left:722.4px;transform-origin:0 0;">Release on produc...</div>
<div class="t " style="top:1410.6px;font-size:28px;line-height:28px;color:#2e569f;font-weight:400;letter-spacing:1.5px;word-spacing:0px;right:1269.1px;text-align:right;transform-origin:100% 0;">1w 2d</div>
<div class="t " style="top:1410.6px;font-size:28px;line-height:28px;color:#2e569f;font-weight:400;letter-spacing:1.15px;word-spacing:0px;right:1055.2px;text-align:right;transform-origin:100% 0;">13 Feb 2024</div>
<svg width="2400" height="1600"><path d="M440.2 459.5 L447.7 467.5 L455.2 459.5" fill="none" stroke="#7b7b82" stroke-width="2.6" stroke-linecap="round" stroke-linejoin="round"/><path d="M440.2 779.5 L447.7 787.5 L455.2 779.5" fill="none" stroke="#7b7b82" stroke-width="2.6" stroke-linecap="round" stroke-linejoin="round"/><path d="M504.2 939.5 L511.7 947.5 L519.2 939.5" fill="none" stroke="#7b7b82" stroke-width="2.6" stroke-linecap="round" stroke-linejoin="round"/><path d="M440.2 1099.5 L447.7 1107.5 L455.2 1099.5" fill="none" stroke="#7b7b82" stroke-width="2.6" stroke-linecap="round" stroke-linejoin="round"/></svg>
<svg width="2400" height="1600"><path d="M495 1485 L495 1513 M481 1499 L509 1499" stroke="#2e569f" stroke-width="2.8" stroke-linecap="round"/></svg>
<div class="t " style="top:1484.5px;font-size:28px;line-height:28px;color:#2e569f;font-weight:400;letter-spacing:0px;word-spacing:0px;left:526.9px;transform-origin:0 0;transform:scaleX(0.885);">새 이슈</div>
<div class="r" style="left:1500px;top:300px;width:900px;height:65px;background:#ffffff;"></div>
<div class="r" style="left:1500px;top:365px;width:900px;height:1197px;background:#f6f6fa;"></div>
<div class="r" style="left:1500px;top:365px;width:900px;height:64px;background:#f7f7fa;"></div>
<div class="r" style="left:1500px;top:365px;width:46.5px;height:1197px;background:repeating-linear-gradient(135deg, #e6e6eb 0px, #e6e6eb 2.2px, rgba(0,0,0,0) 2.2px, rgba(0,0,0,0) 7.7px);"></div>
<div class="r" style="left:2106.5px;top:365px;width:224px;height:1197px;background:repeating-linear-gradient(135deg, #e6e6eb 0px, #e6e6eb 2.2px, rgba(0,0,0,0) 2.2px, rgba(0,0,0,0) 7.7px);"></div>
<div class="r" style="left:1500px;top:364px;width:900px;height:1.5px;background:#dcdce2;"></div>
<div class="r" style="left:1500px;top:428.2px;width:900px;height:1.5px;background:#dcdce2;"></div>
<div class="r" style="left:1545px;top:430px;width:900px;height:320px;border-radius:24px 0 0 24px;background:rgba(234,234,238,0.78);border:1.5px dashed #e0e0e6;border-right:none;box-sizing:border-box;"></div>
<div class="r" style="left:1545px;top:750px;width:900px;height:240px;border-radius:24px 0 0 24px;background:rgba(234,234,238,0.78);border:1.5px dashed #e0e0e6;border-right:none;box-sizing:border-box;"></div>
<div class="r" style="left:1991px;top:910px;width:500px;height:159px;border-radius:24px 0 0 24px;background:rgba(234,234,238,0.78);border:1.5px dashed #e0e0e6;border-right:none;box-sizing:border-box;"></div>
<div class="r" style="left:1545px;top:1070px;width:900px;height:399px;border-radius:24px 0 0 24px;background:rgba(234,234,238,0.78);border:1.5px dashed #e0e0e6;border-right:none;box-sizing:border-box;"></div>
<div class="r" style="left:1657.5px;top:365px;width:2px;height:1197px;background:#e5e5eb;"></div>
<div class="r" style="left:1769.5px;top:365px;width:2px;height:1197px;background:#e5e5eb;"></div>
<div class="r" style="left:1881.5px;top:365px;width:2px;height:1197px;background:#e5e5eb;"></div>
<div class="r" style="left:1993.5px;top:365px;width:2px;height:1197px;background:#e5e5eb;"></div>
<div class="r" style="left:2105.5px;top:365px;width:2px;height:1197px;background:#e5e5eb;"></div>
<div class="r" style="left:2217.5px;top:365px;width:2px;height:1197px;background:#e5e5eb;"></div>
<div class="r" style="left:2329.5px;top:365px;width:2px;height:1197px;background:#e5e5eb;"></div>
<div class="t " style="top:322.0px;font-size:24px;line-height:24px;color:#6b6b73;font-weight:400;letter-spacing:0.9px;word-spacing:0px;left:1562.8px;transform-origin:0 0;">29 January 2024 - 3 February 2024</div>
<div class="t " style="top:322.0px;font-size:24px;line-height:24px;color:#6b6b73;font-weight:400;letter-spacing:0.9px;word-spacing:0px;left:2235.0px;transform-origin:0 0;">4-10 February 2024</div>
<div class="r" style="left:2217.5px;top:302px;width:2px;height:63px;background:#e5e5eb;"></div>
<div class="t " style="top:385.5px;font-size:24px;line-height:24px;color:#6e6e76;font-weight:400;letter-spacing:1.5px;word-spacing:0px;left:1203.2px;width:800px;text-align:center;transform-origin:50% 0;">Mon</div>
<div class="t " style="top:385.5px;font-size:24px;line-height:24px;color:#6e6e76;font-weight:400;letter-spacing:1.5px;word-spacing:0px;left:1315.2px;width:800px;text-align:center;transform-origin:50% 0;">Tue</div>
<div class="t " style="top:385.5px;font-size:24px;line-height:24px;color:#6e6e76;font-weight:400;letter-spacing:1.5px;word-spacing:0px;left:1427.2px;width:800px;text-align:center;transform-origin:50% 0;">Wed</div>
<div class="t " style="top:385.5px;font-size:24px;line-height:24px;color:#6e6e76;font-weight:400;letter-spacing:1.5px;word-spacing:0px;left:1539.2px;width:800px;text-align:center;transform-origin:50% 0;">Thu</div>
<div class="t " style="top:385.5px;font-size:24px;line-height:24px;color:#6e6e76;font-weight:400;letter-spacing:1.5px;word-spacing:0px;left:1651.2px;width:800px;text-align:center;transform-origin:50% 0;">Fri</div>
<div class="t " style="top:385.5px;font-size:24px;line-height:24px;color:#6e6e76;font-weight:400;letter-spacing:1.5px;word-spacing:0px;left:1763.2px;width:800px;text-align:center;transform-origin:50% 0;">Sat</div>
<div class="t " style="top:385.5px;font-size:24px;line-height:24px;color:#6e6e76;font-weight:400;letter-spacing:1.5px;word-spacing:0px;left:1875.2px;width:800px;text-align:center;transform-origin:50% 0;">Sun</div>
<div class="t " style="top:385.5px;font-size:24px;line-height:24px;color:#6e6e76;font-weight:400;letter-spacing:1.5px;word-spacing:0px;left:1987.2px;width:800px;text-align:center;transform-origin:50% 0;">Mon</div>
<svg width="2400" height="1600"><path d="M1548 490 L1561 496 L1548 504 Z" fill="#d5ddf8"/><path d="M1548 810 L1561 816 L1548 824 Z" fill="#d5ddf8"/><path d="M1548 1130 L1561 1136 L1548 1144 Z" fill="#d5ddf8"/></svg>
<div class="r" style="left:1549.6px;top:444px;width:900px;height:52px;background:#d3e2fc;border-radius:26px 0 0 26px;"></div>
<div class="r" style="left:1549.6px;top:445.4px;width:458.4px;height:49px;background:#a6dcfa;border-radius:24.5px 24.5px 24.5px 24.5px;"></div>
<div class="r" style="left:1551px;top:524px;width:444px;height:50px;background:#e2f3e4;border-radius:6px 6px 6px 6px;"></div>
<div class="r" style="left:1997px;top:604px;width:500px;height:50px;background:#fdd6cf;border-radius:24.5px 0 0 24.5px;"></div>
<div class="r" style="left:2332px;top:684px;width:200px;height:50px;background:#e2f3e4;border-radius:6px 0 0 6px;"></div>
<div class="r" style="left:1548px;top:764.5px;width:900px;height:49.5px;background:#d3e2fc;border-radius:24.5px 0 0 24.5px;"></div>
<div class="r" style="left:1548px;top:844px;width:447.5px;height:51px;background:#d3e2fc;border-radius:24.5px 24.5px 24.5px 24.5px;"></div>
<div class="r" style="left:1994.6px;top:924.8px;width:500px;height:50px;background:#e2f3e4;border-radius:6px 0 0 6px;"></div>
<div class="r" style="left:1994.6px;top:1004.6px;width:500px;height:50px;background:#e2f3e4;border-radius:6px 0 0 6px;"></div>
<div class="r" style="left:1548px;top:1085.4px;width:900px;height:49px;background:#a6dcfa;border-radius:24.5px 0 0 24.5px;"></div>
<div class="r" style="left:1548px;top:1165px;width:446px;height:51px;background:#a6dcfa;border-radius:24.5px 24.5px 24.5px 24.5px;"></div>
<div class="r" style="left:1997px;top:1246px;width:500px;height:49px;background:#a6dcfa;border-radius:24.5px 0 0 24.5px;"></div>
<div class="r" style="left:2333px;top:1326px;width:200px;height:49px;background:#a6dcfa;border-radius:24.5px 0 0 24.5px;"></div>
<svg width="2400" height="1600"><path d="M1562 539.5 L1562 559.5 M1568 539.5 L1568 559.5" stroke="#bccabf" stroke-width="2"/><path d="M1975 539.5 L1975 559.5 M1981 539.5 L1981 559.5" stroke="#bccabf" stroke-width="2"/><path d="M2010.7 619.5 L2010.7 639.5 M2016.7 619.5 L2016.7 639.5" stroke="#e3b7b0" stroke-width="2"/><path d="M2346.7 699.5 L2346.7 719.5 M2352.7 699.5 L2352.7 719.5" stroke="#bccabf" stroke-width="2"/><path d="M1562 859.5 L1562 879.5 M1568 859.5 L1568 879.5" stroke="#b4c8ee" stroke-width="2"/><path d="M1974.5 859.5 L1974.5 879.5 M1980.5 859.5 L1980.5 879.5" stroke="#b4c8ee" stroke-width="2"/><path d="M2007.5 1019.5 L2007.5 1039.5 M2013.5 1019.5 L2013.5 1039.5" stroke="#bccabf" stroke-width="2"/><path d="M1562 1179.5 L1562 1199.5 M1568 1179.5 L1568 1199.5" stroke="#84c2e8" stroke-width="2"/><path d="M1974.5 1179.5 L1974.5 1199.5 M1980.5 1179.5 L1980.5 1199.5" stroke="#84c2e8" stroke-width="2"/><path d="M2009.6 1259.5 L2009.6 1279.5 M2015.6 1259.5 L2015.6 1279.5" stroke="#84c2e8" stroke-width="2"/><path d="M2347 1339.5 L2347 1359.5 M2353 1339.5 L2353 1359.5" stroke="#84c2e8" stroke-width="2"/><path d="M1996 549.5 C2016 549.5 2026.5 558 2026.5 569.5 C2026.5 582 2014 589.5 1997 589.5 C1978 589.5 1963 598 1963 609.5 C1963 621 1972 628 1986 630" fill="none" stroke="#cfcfd4" stroke-width="1.8"/><path d="M1984 624.5 L1995.5 630 L1984 635.7 Z" fill="#cfcfd4"/><path d="M1996 869.5 C2016 869.5 2026.5 878 2026.5 889.5 C2026.5 902 2014 909.5 1997 909.5 C1978 909.5 1963 918 1963 929.5 C1963 941 1972 948 1986 950" fill="none" stroke="#cfcfd4" stroke-width="1.8"/><path d="M1984 944.5 L1995.5 950 L1984 955.7 Z" fill="#cfcfd4"/><path d="M1996 1189.5 C2016 1189.5 2026.5 1198 2026.5 1209.5 C2026.5 1222 2014 1229.5 1997 1229.5 C1978 1229.5 1963 1238 1963 1249.5 C1963 1261 1972 1268 1986 1270" fill="none" stroke="#cfcfd4" stroke-width="1.8"/><path d="M1984 1264.5 L1995.5 1270 L1984 1275.7 Z" fill="#cfcfd4"/><path d="M2400 670 L2328 670 C2292 670 2292 708 2324 710" fill="none" stroke="#d12a3a" stroke-width="2"/><path d="M2320 704 L2331.5 710 L2320 716 Z" fill="#d12a3a"/><path d="M2400 1310 L2328 1310 C2292 1310 2292 1348 2324 1350" fill="none" stroke="#d12a3a" stroke-width="2"/><path d="M2320 1344 L2331.5 1350 L2320 1356 Z" fill="#d12a3a"/></svg>
<div class="t " style="top:456.2px;font-size:28px;line-height:28px;color:#2b559f;font-weight:400;letter-spacing:1.0px;word-spacing:0px;left:1580.5px;transform-origin:0 0;">DEV-95</div>
<div class="t " style="top:456.2px;font-size:28px;line-height:28px;color:#1f2329;font-weight:400;letter-spacing:0.9px;word-spacing:0px;left:1699.0px;transform-origin:0 0;">Prepare content</div>
<div class="t " style="top:536.1px;font-size:28px;line-height:28px;color:#2a7b3e;font-weight:400;letter-spacing:1.0px;word-spacing:0px;left:1580.5px;transform-origin:0 0;text-decoration:line-through;text-decoration-thickness:2px;">DEV-94</div>
<div class="t " style="top:536.1px;font-size:28px;line-height:28px;color:#1f2329;font-weight:400;letter-spacing:0.9px;word-spacing:0px;left:1699.7px;transform-origin:0 0;">Write texts</div>
<div class="t " style="top:616.1px;font-size:28px;line-height:28px;color:#d12a3a;font-weight:400;letter-spacing:0.4px;word-spacing:0px;left:2028.6px;transform-origin:0 0;">DEV-110</div>
<div class="t " style="top:616.1px;font-size:28px;line-height:28px;color:#1f2329;font-weight:400;letter-spacing:0.9px;word-spacing:0px;left:2154.6px;transform-origin:0 0;">Localize text</div>
<div class="t " style="top:696.1px;font-size:28px;line-height:28px;color:#2a7b3e;font-weight:400;letter-spacing:1.0px;word-spacing:0px;left:2364.4px;transform-origin:0 0;text-decoration:line-through;text-decoration-thickness:2px;">DEV-96</div>
<div class="t " style="top:776.1px;font-size:28px;line-height:28px;color:#2b559f;font-weight:400;letter-spacing:1.0px;word-spacing:0px;left:1580.5px;transform-origin:0 0;">DEV-97</div>
<div class="t " style="top:776.1px;font-size:28px;line-height:28px;color:#1f2329;font-weight:400;letter-spacing:0.9px;word-spacing:0px;left:1697.0px;transform-origin:0 0;">Prepare design</div>
<div class="t " style="top:856.1px;font-size:28px;line-height:28px;color:#2b559f;font-weight:400;letter-spacing:1.0px;word-spacing:0px;left:1580.5px;transform-origin:0 0;">DEV-98</div>
<div class="t " style="top:856.1px;font-size:28px;line-height:28px;color:#1f2329;font-weight:400;letter-spacing:0.9px;word-spacing:0px;left:1699.0px;transform-origin:0 0;">Prepare Figma dr...</div>
<div class="t " style="top:936.1px;font-size:28px;line-height:28px;color:#2a7b3e;font-weight:400;letter-spacing:1.0px;word-spacing:0px;left:2028.7px;transform-origin:0 0;text-decoration:line-through;text-decoration-thickness:2px;">DEV-99</div>
<div class="t " style="top:936.1px;font-size:28px;line-height:28px;color:#1f2329;font-weight:400;letter-spacing:0.9px;word-spacing:0px;left:2147.8px;transform-origin:0 0;">Create graphics</div>
<div class="t " style="top:1016.1px;font-size:28px;line-height:28px;color:#2a7b3e;font-weight:400;letter-spacing:0.4px;word-spacing:0px;left:2028.7px;transform-origin:0 0;text-decoration:line-through;text-decoration-thickness:2px;">DEV-100</div>
<div class="t " style="top:1016.1px;font-size:28px;line-height:28px;color:#1f2329;font-weight:400;letter-spacing:0.9px;word-spacing:0px;left:2160.5px;transform-origin:0 0;">Test designs</div>
<div class="t " style="top:1096.1px;font-size:28px;line-height:28px;color:#2b559f;font-weight:400;letter-spacing:0.4px;word-spacing:0px;left:1580.5px;transform-origin:0 0;">DEV-101</div>
<div class="t " style="top:1096.1px;font-size:28px;line-height:28px;color:#1f2329;font-weight:400;letter-spacing:0.9px;word-spacing:0px;left:1707.6px;transform-origin:0 0;">Page creation</div>
<div class="t " style="top:1176.1px;font-size:28px;line-height:28px;color:#2b559f;font-weight:400;letter-spacing:0.4px;word-spacing:0px;left:1580.5px;transform-origin:0 0;">DEV-106</div>
<div class="t " style="top:1176.1px;font-size:28px;line-height:28px;color:#1f2329;font-weight:400;letter-spacing:0.9px;word-spacing:0px;left:1711.9px;transform-origin:0 0;">Design new landi...</div>
<div class="t " style="top:1256.1px;font-size:28px;line-height:28px;color:#2b559f;font-weight:400;letter-spacing:0.4px;word-spacing:0px;left:2028.6px;transform-origin:0 0;">DEV-107</div>
<div class="t " style="top:1256.1px;font-size:28px;line-height:28px;color:#1f2329;font-weight:400;letter-spacing:0.9px;word-spacing:0px;left:2158.5px;transform-origin:0 0;">Test new landing page</div>
<div class="t " style="top:1336.1px;font-size:28px;line-height:28px;color:#2b559f;font-weight:400;letter-spacing:0.4px;word-spacing:0px;left:2366.0px;transform-origin:0 0;">DEV-103</div>
</div></body></html>
